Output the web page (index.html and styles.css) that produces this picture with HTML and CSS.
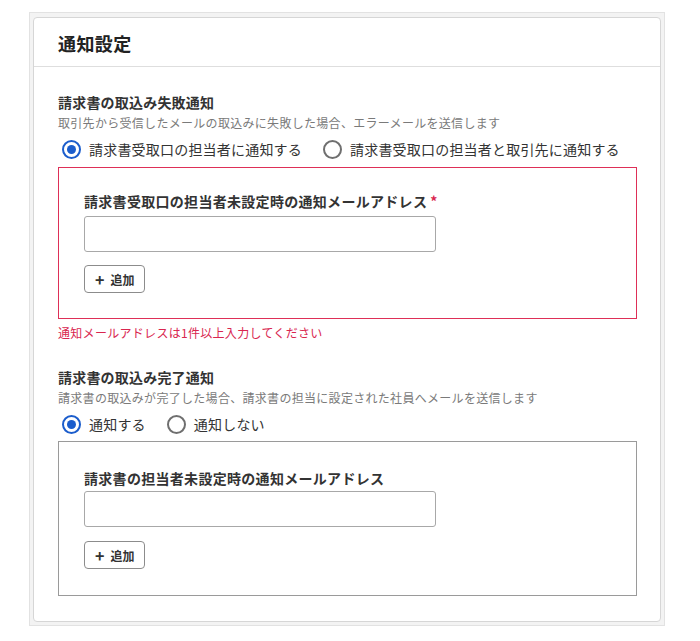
FILE: index.html
```html
<!DOCTYPE html>
<html lang="ja">
<head>
<meta charset="utf-8">
<link rel="stylesheet" href="styles.css">
</head>
<body>
<div class="frame">
  <div class="card">
    <div class="card-header"><h2 class="card-title">通知設定</h2></div>
    <div class="card-body">
      <section class="section">
        <h3 class="section-title">請求書の取込み失敗通知</h3>
        <p class="section-desc">取引先から受信したメールの取込みに失敗した場合、エラーメールを送信します</p>
        <div class="radio-group">
          <label class="radio"><span class="radio-mark checked"></span><span class="radio-text">請求書受取口の担当者に通知する</span></label>
          <label class="radio"><span class="radio-mark"></span><span class="radio-text">請求書受取口の担当者と取引先に通知する</span></label>
        </div>
        <div class="field-box field-box-error">
          <div class="field-label">請求書受取口の担当者未設定時の通知メールアドレス<span class="required">*</span></div>
          <div class="input"></div>
          <button class="add-btn"><span class="plus">+</span>追加</button>
        </div>
        <p class="error-text">通知メールアドレスは1件以上入力してください</p>
      </section>
      <section class="section section-second">
        <h3 class="section-title">請求書の取込み完了通知</h3>
        <p class="section-desc">請求書の取込みが完了した場合、請求書の担当に設定された社員へメールを送信します</p>
        <div class="radio-group">
          <label class="radio"><span class="radio-mark checked"></span><span class="radio-text">通知する</span></label>
          <label class="radio"><span class="radio-mark"></span><span class="radio-text">通知しない</span></label>
        </div>
        <div class="field-box field-box-plain">
          <div class="field-label">請求書の担当者未設定時の通知メールアドレス</div>
          <div class="input input-plain"></div>
          <button class="add-btn add-btn-plain"><span class="plus">+</span>追加</button>
        </div>
      </section>
    </div>
  </div>
</div>
</body>
</html>
```
FILE: styles.css
```css
* { box-sizing: border-box; }
html, body { margin: 0; padding: 0; background: #fff; }
body {
  font-family: "Noto Sans CJK JP", "Noto Sans", sans-serif;
  color: #333;
}
.frame {
  margin: 12px 0 0 29px;
  width: 636px;
  padding: 4px 3px 3px 3px;
  border: 1px solid #e2e2e2;
  background: #f3f3f3;
}
.card {
  background: #fff;
  border: 1px solid #d6d6d6;
  border-radius: 4px;
}
.card-header {
  height: 49px;
  display: flex;
  align-items: center;
  padding: 0 24px;
  border-bottom: 1px solid #dedede;
}
.card-title {
  margin: 0;
  font-size: 18px;
  font-weight: 700;
  color: #222;
  line-height: 24px;
  padding-top: 2px;
  letter-spacing: 0.4px;
}
.card-body {
  padding: 25px 24px 25px 24px;
}
.section-title {
  margin: 0;
  font-size: 14px;
  line-height: 20px;
  font-weight: 700;
  color: #333;
  letter-spacing: 0.2px;
}
.section-desc {
  margin: 2px 0 0;
  font-size: 12px;
  line-height: 18px;
  color: #7a7a7a;
  letter-spacing: 0.3px;
}
.radio-group {
  display: flex;
  align-items: center;
  margin-top: 5px;
  height: 24px;
  white-space: nowrap;
}
.radio {
  display: flex;
  align-items: center;
  flex: none;
  margin-right: 21px;
  margin-left: 4px;
}
.radio + .radio { margin-left: 0; }
.radio-mark {
  width: 19px;
  height: 19px;
  border-radius: 50%;
  border: 2px solid #6f6f6f;
  margin-right: 8px;
  position: relative;
  flex: none;
}
.radio-mark.checked {
  border-color: #1b5dcc;
}
.radio-mark.checked::after {
  content: "";
  position: absolute;
  left: 3px;
  top: 3px;
  width: 9px;
  height: 9px;
  border-radius: 50%;
  background: #1b5dcc;
}
.radio-text {
  font-size: 14px;
  line-height: 20px;
  color: #333;
  letter-spacing: 0.2px;
}
.field-box {
  margin-top: 6px;
  width: 579px;
  padding: 23px 25px 25px;
}
.field-box-error {
  border: 1px solid #de2f57;
}
.field-box-plain {
  border: 1px solid #9a9a9a;
  margin-top: 5px;
  padding: 26px 25px 26px;
}
.field-label {
  font-size: 14px;
  line-height: 20px;
  font-weight: 700;
  color: #333;
  letter-spacing: 0.3px;
}
.required {
  color: #d9264f;
  margin-left: 3px;
}
.input {
  margin-top: 5px;
  width: 352px;
  height: 36px;
  border: 1px solid #a8a8a8;
  border-radius: 3px;
  background: #fff;
}
.input-plain { margin-top: 3px; }
.add-btn {
  display: flex;
  align-items: center;
  margin-top: 13px;
  width: 61px;
  height: 28px;
  padding: 0 0 0 10px;
  border: 1px solid #8c8c8c;
  border-radius: 4px;
  background: #fff;
  font-family: "Noto Sans CJK JP", "Noto Sans", sans-serif;
  font-size: 12px;
  font-weight: 700;
  color: #333;
}
.add-btn-plain { margin-top: 14px; }
.plus {
  font-size: 16px;
  font-weight: 700;
  margin-right: 6px;
  line-height: 1;
}
.error-text {
  margin: 5px 0 0;
  font-size: 12px;
  line-height: 18px;
  color: #d9264f;
  letter-spacing: 0.3px;
}
.section-second {
  margin-top: 25px;
}
```
